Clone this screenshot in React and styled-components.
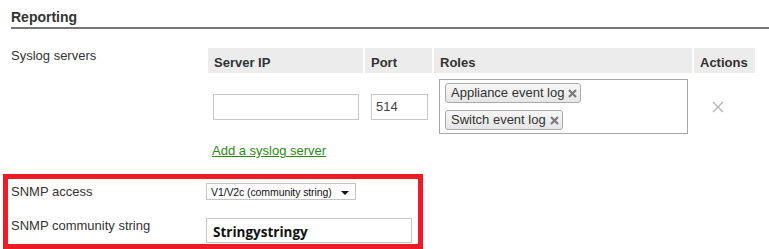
import styled, { createGlobalStyle } from "styled-components";

const GlobalStyle = createGlobalStyle`
  body {
    margin: 0;
    background: #fff;
    font-family: "Liberation Sans", Arial, sans-serif;
    color: #333;
  }
`;

const Page = styled.div`
  width: 769px;
  padding-top: 9px;
`;

const SectionTitle = styled.h2`
  margin: 0 0 0 11px;
  font-size: 14px;
  line-height: 17px;
  font-weight: bold;
  color: #333;
  padding-bottom: 1px;
  border-bottom: 2px solid #777;
`;

const FieldRow = styled.div`
  display: flex;
  align-items: flex-start;
  margin-left: ${(p) => p.$indent || 11}px;
  margin-top: ${(p) => p.$top || 0}px;
`;

const Label = styled.div`
  width: ${(p) => p.$width || 197}px;
  flex-shrink: 0;
  font-size: 13px;
  line-height: 15px;
  padding-top: ${(p) => p.$pad || 0}px;
`;

const Table = styled.div`
  display: grid;
  grid-template-columns: 155px 67px 258px 61px;
  column-gap: 2px;
`;

const HeadCell = styled.div`
  background: #ececec;
  font-size: 13px;
  font-weight: bold;
  line-height: 15px;
  padding: 7px 6px 3px;
  color: #333;
`;

const Cell = styled.div`
  display: flex;
  align-items: center;
  padding: 6px 0 4px ${(p) => p.$pad || 5}px;
`;

const TextInput = styled.input`
  box-sizing: border-box;
  width: ${(p) => p.$width}px;
  height: 26px;
  border: 1px solid #c8c8c8;
  padding: 0 4px;
  font-family: "Liberation Sans", Arial, sans-serif;
  font-size: 13px;
  color: #444;
  outline: none;
`;

const RolesBox = styled.div`
  box-sizing: border-box;
  width: 249px;
  height: 55px;
  border: 1px solid #a6a6a6;
  padding: 3px 5px;
  display: flex;
  flex-direction: column;
  align-items: flex-start;
  gap: 7px;
`;

const Tag = styled.span`
  box-sizing: border-box;
  height: 20px;
  display: inline-flex;
  align-items: center;
  gap: 4px;
  padding: 0 3px 0 5px;
  border: 1px solid #aaa;
  border-radius: 3px;
  background: linear-gradient(#f6f6f6, #e6e6e6);
  font-size: 13px;
  line-height: 18px;
  color: #333;
`;

const RemoveCell = styled(Cell)`
  padding-left: 18px;
`;

const AddLink = styled.a`
  display: inline-block;
  margin: 5px 0 0 4px;
  font-size: 13px;
  line-height: 15px;
  color: #2b8a12;
  text-decoration: underline;
`;

const Highlight = styled.div`
  box-sizing: border-box;
  width: 420px;
  margin: 15px 0 0 3px;
  border: 5px solid #ed1c24;
  padding: 4px 0 1px;
`;

const Select = styled.div`
  box-sizing: border-box;
  width: 150px;
  height: 17px;
  border: 1px solid #c4c4c4;
  display: flex;
  align-items: center;
  justify-content: space-between;
  padding: 0 6px 0 4px;
  font-size: 10.5px;
  color: #111;
  letter-spacing: -0.1px;
`;

const Arrow = styled.span`
  width: 0;
  height: 0;
  border-left: 4px solid transparent;
  border-right: 4px solid transparent;
  border-top: 4px solid #111;
  margin-top: 2px;
`;

const StringInput = styled.input`
  box-sizing: border-box;
  width: 206px;
  height: 25px;
  border: 1px solid #c8c8c8;
  padding: 3px 6px 0;
  font-family: "Open Sans", sans-serif;
  font-weight: 700;
  font-size: 13.5px;
  color: #111;
  outline: none;
`;

const TagX = () => (
  <svg width="9" height="9" viewBox="0 0 9 9">
    <path d="M1 1L8 8M8 1L1 8" stroke="#7a7a7a" strokeWidth="2.2" />
  </svg>
);

const RemoveX = () => (
  <svg width="12" height="12" viewBox="0 0 12 12">
    <path d="M1 1L11 11M11 1L1 11" stroke="#b4b4b4" strokeWidth="1.4" />
  </svg>
);

export default function App() {
  return (
    <>
      <GlobalStyle />
      <Page>
        <SectionTitle>Reporting</SectionTitle>

        <FieldRow $top={19}>
          <Label>Syslog servers</Label>
          <div>
            <Table>
              <HeadCell>Server IP</HeadCell>
              <HeadCell>Port</HeadCell>
              <HeadCell>Roles</HeadCell>
              <HeadCell>Actions</HeadCell>

              <Cell>
                <TextInput $width={146} defaultValue="" />
              </Cell>
              <Cell $pad={6}>
                <TextInput $width={57} defaultValue="514" />
              </Cell>
              <Cell>
                <RolesBox>
                  <Tag>
                    Appliance event log <TagX />
                  </Tag>
                  <Tag>
                    Switch event log <TagX />
                  </Tag>
                </RolesBox>
              </Cell>
              <RemoveCell>
                <RemoveX />
              </RemoveCell>
            </Table>
            <AddLink href="#">Add a syslog server</AddLink>
          </div>
        </FieldRow>

        <Highlight>
          <FieldRow $indent={3}>
            <Label $width={195} $pad={1}>SNMP access</Label>
            <Select>
              V1/V2c (community string)
              <Arrow />
            </Select>
          </FieldRow>
          <FieldRow $indent={3} $top={18}>
            <Label $width={195}>SNMP community string</Label>
            <StringInput defaultValue="Stringystringy" />
          </FieldRow>
        </Highlight>
      </Page>
    </>
  );
}
